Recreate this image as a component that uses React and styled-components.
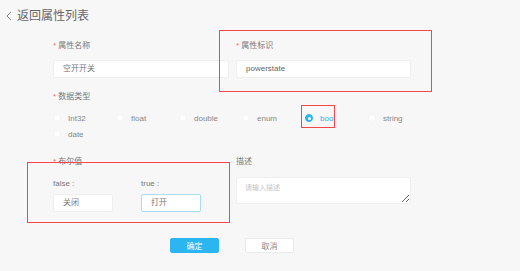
import React from "react";
import styled, { createGlobalStyle } from "styled-components";

const GlobalStyle = createGlobalStyle`
  html, body {
    margin: 0;
    padding: 0;
    background: #f7f7f7;
    font-family: "Liberation Sans", "Noto Sans CJK SC", sans-serif;
  }
`;

const Page = styled.div`
  position: relative;
  width: 520px;
  height: 271px;
  overflow: hidden;
  background: #f7f7f7;
  color: #777;
`;

const Header = styled.div`
  display: flex;
  align-items: center;
  gap: 5px;
  padding: 9px 0 0 6px;
  height: 14px;
  font-size: 12px;
  line-height: 14px;
  color: #666;
`;

const Form = styled.div`
  margin: 18px 0 0 53px;
  width: 358px;
  display: flex;
  flex-direction: column;
`;

const Row = styled.div`
  display: grid;
  grid-template-columns: 176px 175px;
  column-gap: 7px;
  margin-top: ${p => p.$mt || 0}px;
`;

const Field = styled.div`
  display: flex;
  flex-direction: column;
`;

const Label = styled.div`
  font-size: 8px;
  line-height: 10px;
  height: 10px;
  color: #777;
  white-space: nowrap;
  &::before {
    content: ${p => (p.$required ? '"* "' : '""')};
    color: #f56c6c;
  }
`;

const Input = styled.div`
  box-sizing: border-box;
  width: ${p => p.$w || "100%"};
  height: 18px;
  margin-top: ${p => p.$mt || 9}px;
  padding-left: 9px;
  background: #fff;
  border: 1px solid ${p => (p.$focus ? "#a9dcf2" : "#efefef")};
  border-radius: 2px;
  font-size: 8px;
  line-height: 16px;
  color: ${p => p.$color || "#777"};
`;

const Area = styled.textarea`
  box-sizing: border-box;
  width: 100%;
  height: 27px;
  margin-top: 10px;
  padding: 4px 8px;
  background: #fff;
  border: 1px solid #efefef;
  border-radius: 2px;
  font-family: inherit;
  font-size: 7px;
  resize: vertical;
  outline: none;
  &::placeholder {
    color: #c4c4c4;
  }
`;

const RadioGrid = styled.div`
  display: grid;
  grid-template-columns: repeat(6, 63px);
  grid-auto-rows: 16px;
  margin-top: 8px;
`;

const RadioItem = styled.div`
  display: flex;
  align-items: center;
  gap: 7px;
  font-size: 8px;
  color: ${p => (p.$checked ? "#2bb6f2" : "#888")};
`;

const Dot = styled.span`
  position: relative;
  box-sizing: border-box;
  width: 8px;
  height: 8px;
  border-radius: 50%;
  background: ${p => (p.$checked ? "#2bb6f2" : "#fff")};
  border: 1px solid ${p => (p.$checked ? "#2bb6f2" : "#f2f2f2")};
  &::after {
    content: "";
    display: ${p => (p.$checked ? "block" : "none")};
    position: absolute;
    left: 1.5px;
    top: 1.5px;
    width: 3px;
    height: 3px;
    border-radius: 50%;
    background: #fff;
  }
`;

const BoolGrid = styled.div`
  display: grid;
  grid-template-columns: 88px 88px;
  margin-top: 12px;
`;

const Buttons = styled.div`
  display: flex;
  justify-content: center;
  gap: 26px;
  margin-top: 26px;
`;

const Button = styled.div`
  box-sizing: border-box;
  width: 49px;
  height: 15px;
  display: flex;
  align-items: center;
  justify-content: center;
  font-size: 8px;
  border-radius: 2px;
  background: ${p => (p.$primary ? "#2bb6f2" : "#fff")};
  color: ${p => (p.$primary ? "#fff" : "#888")};
  border: 1px solid ${p => (p.$primary ? "#2bb6f2" : "#eaeaea")};
`;

const Mark = styled.div`
  position: absolute;
  box-sizing: border-box;
  border: 1.5px solid #f4474c;
  pointer-events: none;
`;

const types = ["Int32", "float", "double", "enum", "bool", "string", "date"];

export default function App() {
  return (
    <Page>
      <GlobalStyle />
      <Header>
        <svg width="6" height="10" viewBox="0 0 6 10">
          <path d="M5 1 L1 5 L5 9" fill="none" stroke="#888" strokeWidth="1" />
        </svg>
        返回属性列表
      </Header>
      <Form>
        <Row>
          <Field>
            <Label $required>属性名称</Label>
            <Input>空开开关</Input>
          </Field>
          <Field>
            <Label $required>属性标识</Label>
            <Input $color="#666">powerstate</Input>
          </Field>
        </Row>
        <Field style={{ marginTop: 14 }}>
          <Label $required>数据类型</Label>
          <RadioGrid>
            {types.map(t => (
              <RadioItem key={t} $checked={t === "bool"}>
                <Dot $checked={t === "bool"} />
                {t}
              </RadioItem>
            ))}
          </RadioGrid>
        </Field>
        <Row $mt={15}>
          <Field>
            <Label $required>布尔值</Label>
            <BoolGrid>
              <Field>
                <Label>false :</Label>
                <Input $w="60px" $mt={5}>关闭</Input>
              </Field>
              <Field>
                <Label>true :</Label>
                <Input $w="60px" $mt={5} $focus>打开</Input>
              </Field>
            </BoolGrid>
          </Field>
          <Field>
            <Label>描述</Label>
            <Area placeholder="请输入描述" />
          </Field>
        </Row>
        <Buttons>
          <Button $primary>确定</Button>
          <Button>取消</Button>
        </Buttons>
      </Form>
      <Mark style={{ left: 219, top: 30, width: 213, height: 62 }} />
      <Mark style={{ left: 301, top: 105, width: 34, height: 23 }} />
      <Mark style={{ left: 27, top: 162, width: 203, height: 61 }} />
    </Page>
  );
}
